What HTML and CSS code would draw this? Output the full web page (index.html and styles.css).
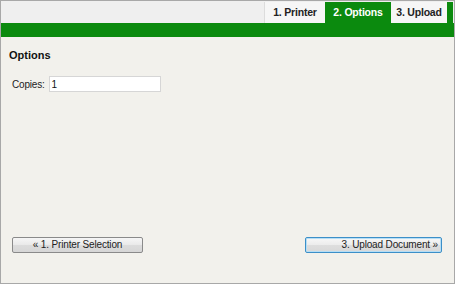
FILE: index.html
```html
<!DOCTYPE html>
<html>
<head>
<meta charset="utf-8">
<link rel="stylesheet" href="styles.css">
</head>
<body>
<div class="frame">
  <div class="tabbar">
    <div class="tab tab-printer">1. Printer</div>
    <div class="tab tab-active tab-options">2. Options</div>
    <div class="tab tab-upload">3. Upload</div>
  </div>
  <div class="greenbar"></div>
  <div class="content">
    <h2 class="heading">Options</h2>
    <div class="field">
      <label class="label">Copies:</label>
      <input class="input" type="text" value="1">
    </div>
    <div class="buttons">
      <button class="btn btn-prev">« 1. Printer Selection</button>
      <button class="btn btn-next">3. Upload Document »</button>
    </div>
  </div>
</div>
</body>
</html>
```
FILE: styles.css
```css
* { box-sizing: border-box; }
html, body { margin: 0; padding: 0; background: #ffffff; }
body { font-family: "Liberation Sans", Arial, sans-serif; font-size: 10px; color: #111; }
.frame {
  width: 455px;
  height: 284px;
  border: 1px solid #a8a8a8;
  background: #f2f1ec;
  display: flex;
  flex-direction: column;
}
.tabbar {
  height: 22px;
  background: #efefef;
  display: flex;
  justify-content: flex-end;
  align-items: flex-end;
  padding-right: 1px;
}
.tab {
  height: 21px;
  line-height: 21px;
  font-weight: bold;
  font-size: 10.5px;
  letter-spacing: -0.2px;
  text-align: center;
  background: #f6f6f6;
  color: #222;
}
.tab-printer { width: 61px; border-left: 1px solid #dcdcdc; }
.tab-options { width: 66px; }
.tab-upload { width: 62px; border-right: 6px solid #0b8a0e; }
.tab-active { background: #0b8a0e; color: #ffffff; }
.greenbar { height: 14px; background: #0b8a0e; }
.content {
  flex: 1;
  display: flex;
  flex-direction: column;
  padding: 11px 0 0 8px;
}
.heading {
  margin: 0;
  font-size: 11px;
  line-height: 14px;
  font-weight: bold;
  color: #111;
}
.field {
  display: flex;
  align-items: center;
  margin-top: 14px;
  padding-left: 3px;
}
.label { font-size: 10px; letter-spacing: -0.2px; color: #222; margin-right: 4px; }
.input {
  width: 112px;
  height: 16px;
  border: 1px solid #d6d6d6;
  background: #fff;
  font-family: "Liberation Sans", Arial, sans-serif;
  font-size: 10px;
  padding: 0 2px;
  margin: 0;
  color: #111;
}
.buttons {
  display: flex;
  justify-content: space-between;
  margin-top: auto;
  margin-bottom: 30px;
  padding: 0 12px 0 3px;
}
.btn {
  height: 16px;
  margin: 0;
  padding: 0 3px;
  font-family: "Liberation Sans", Arial, sans-serif;
  font-size: 10px;
  letter-spacing: -0.15px;
  line-height: 14px;
  color: #222;
  border: 1px solid #8a8a8a;
  border-radius: 2px;
  background: linear-gradient(#f6f6f6, #e9e9e9 50%, #dcdcdc 51%, #d6d6d6);
}
.btn-prev { width: 131px; text-align: center; }
.btn-next {
  width: 137px;
  text-align: right;
  border-color: #3c8fc8;
  box-shadow: inset 0 0 0 1px #b6def5;
  background: linear-gradient(#f7f7f7, #ececec 50%, #dedede 51%, #d8d8d8);
}
```
